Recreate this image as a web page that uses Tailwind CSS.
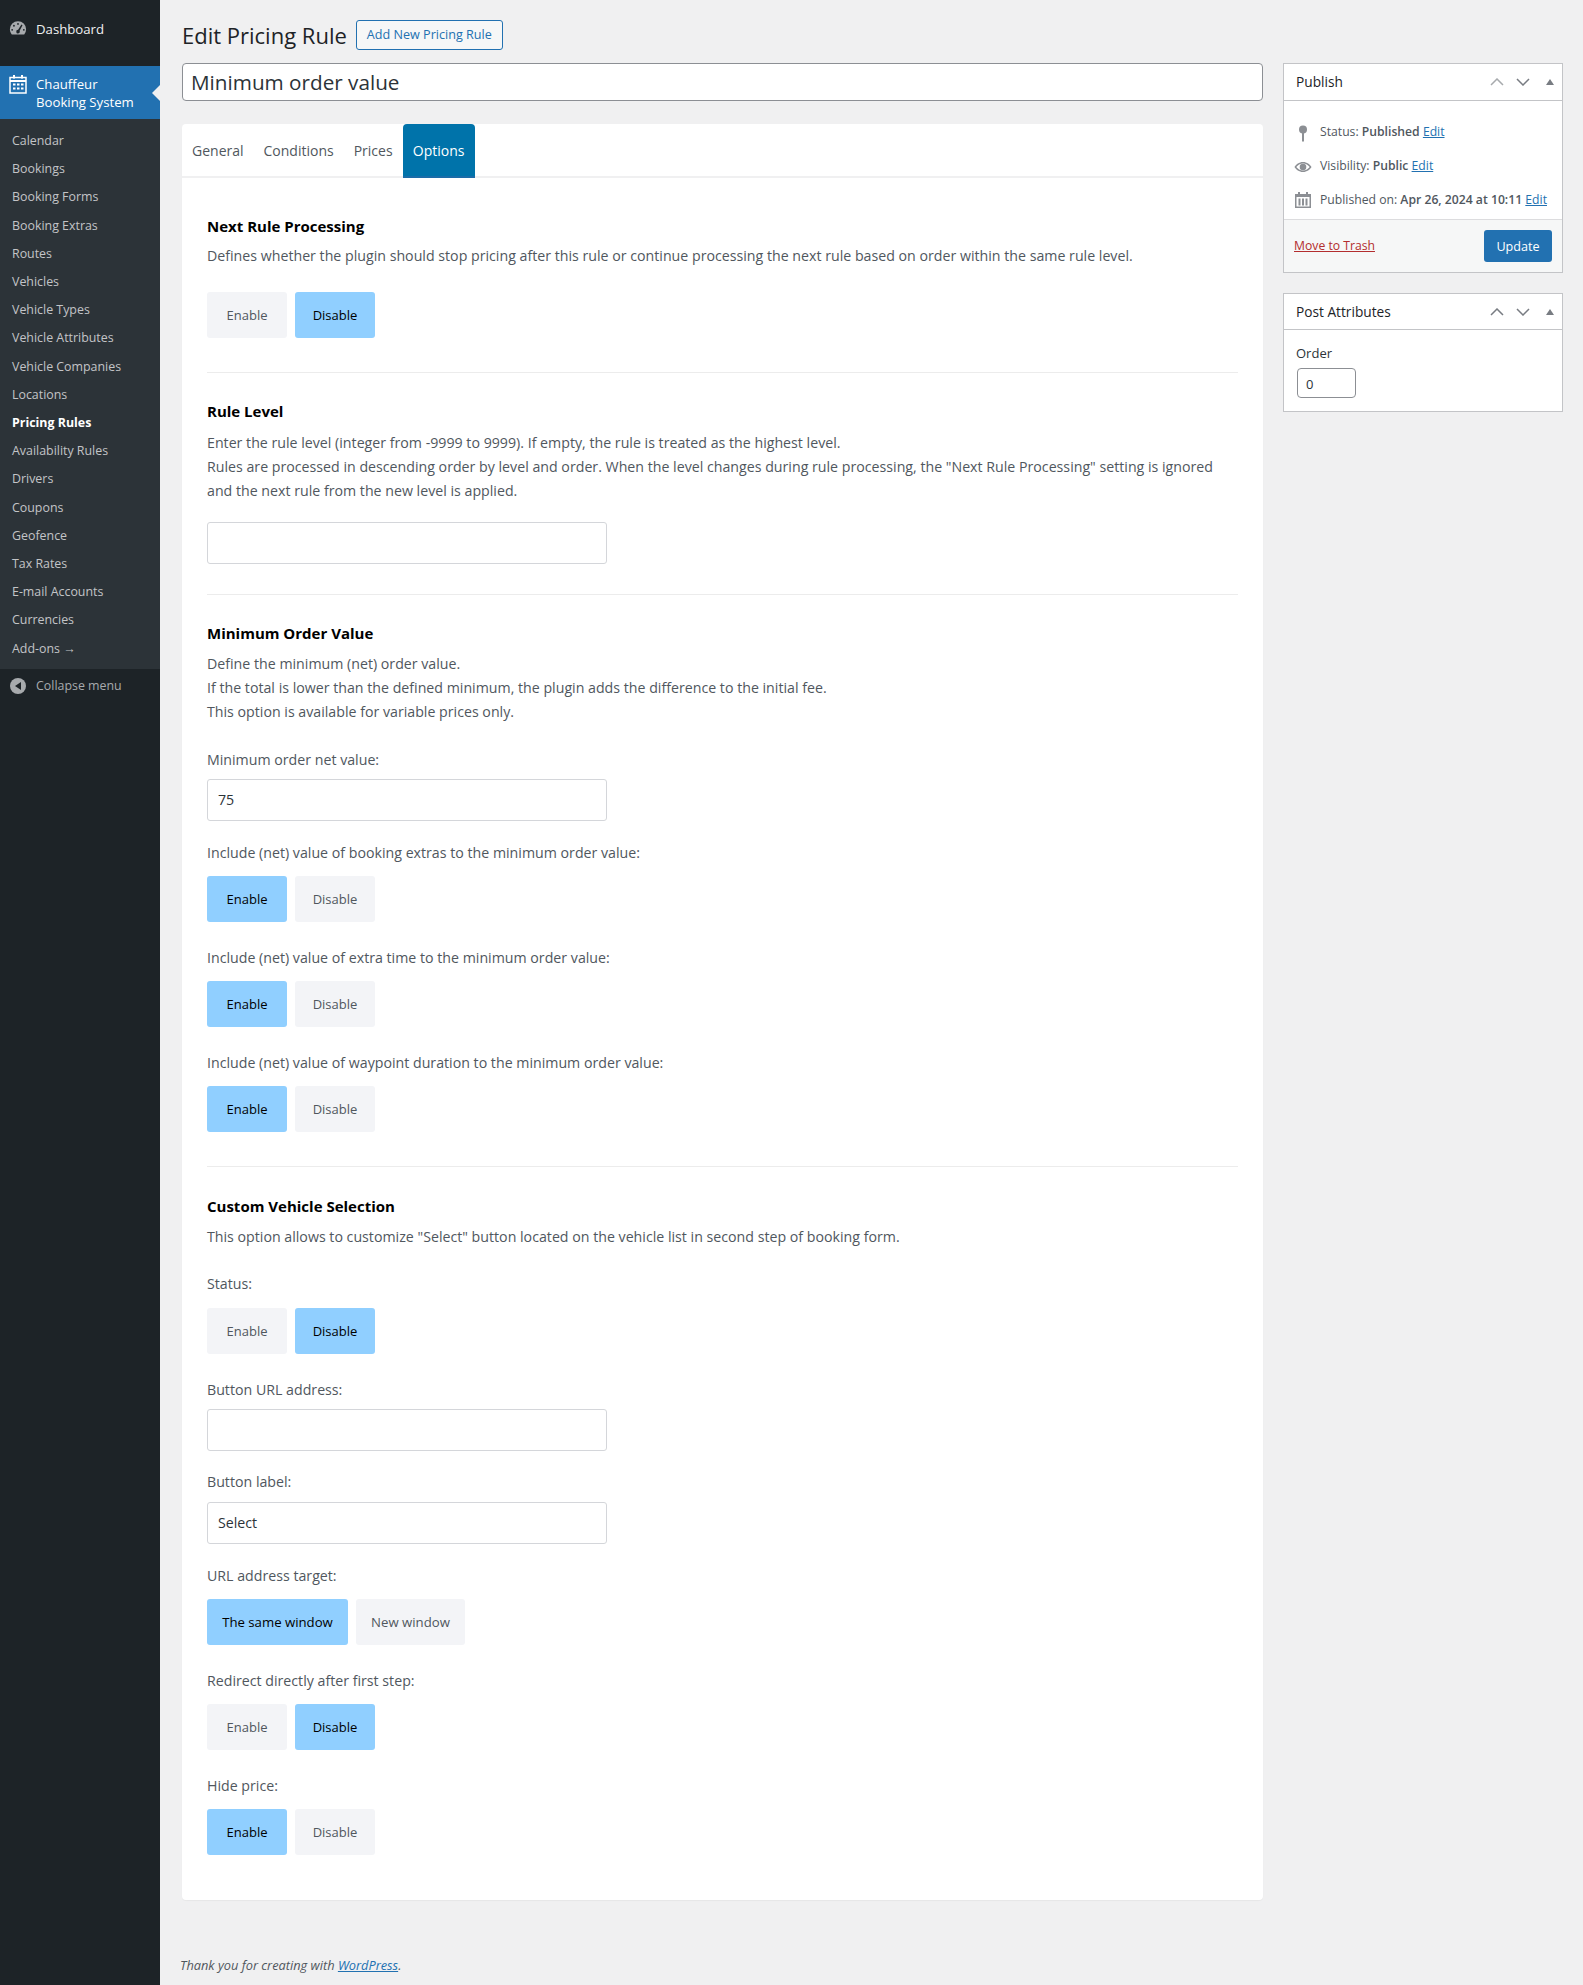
<!DOCTYPE html>
<html lang="en">
<head>
<meta charset="UTF-8">
<title>Edit Pricing Rule</title>
<script src="https://cdn.jsdelivr.net/npm/@tailwindcss/browser@4"></script>
</head>
<body class="bg-[#f0f0f1] font-['Open_Sans',sans-serif] text-[#50575e] antialiased">
<div class="flex min-h-[1985px]">
  <!-- admin menu -->
  <aside class="w-[160px] shrink-0 bg-[#1d2327] text-[12.4px]">
    <div class="h-[66px] pt-[20px] pl-[9px] flex items-start gap-[9px] text-[#f0f0f1] text-[13.2px]">
      <svg class="w-[18px] h-[18px] mt-[-1px] text-[#a7aaad]" viewBox="0 0 20 20" fill="currentColor"><path d="M10 2.500a9 9 0 0 0-9 9c0 2.200.8 4.200 2.100 5.800h13.800A9 9 0 0 0 19 11.500a9 9 0 0 0-9-9zM10 4.500a1 1 0 1 1 0 2 1 1 0 0 1 0-2zM5.500 6.500a1 1 0 1 1 0 2 1 1 0 0 1 0-2zM3.500 11a1 1 0 1 1 0 2 1 1 0 0 1 0-2zM16.500 11a1 1 0 1 1 0 2 1 1 0 0 1 0-2zM13.800 6.200l1.200.8-3.200 6a2 2 0 1 1-1.700-1z"/></svg>
      <span class="leading-[18px]">Dashboard</span>
    </div>
    <div class="relative h-[53px] bg-[#2271b1] text-white pl-[9px] pt-[9px] flex gap-[9px] text-[13.2px] leading-[18px]">
      <svg class="w-[18px] h-[20px] mt-[-1px]" viewBox="0 0 18 20" fill="none" stroke="currentColor" stroke-width="1.500"><rect x="1" y="3.500" width="16" height="15.500"/><path d="M1 7h16" stroke-width="2"/><path d="M5 1v3.500M13 1v3.500" stroke-width="2"/><path d="M4 9.500h2.500v2H4zM8 9.500h2.500v2H8zM12 9.500h2.500v2H12zM4 13.500h2.500v2H4zM8 13.500h2.500v2H8zM12 13.500h2.500v2H12z" fill="currentColor" stroke="none"/></svg>
      <span>Chauffeur<br>Booking System</span>
      <span class="absolute right-0 top-[19px] border-y-[8px] border-r-[8px] border-y-transparent border-r-[#f0f0f1]"></span>
    </div>
    <nav class="bg-[#2c3338] h-[550px] pt-[8px] pl-[12px] text-[#c3c4c7] leading-[28.2px] flex flex-col">
      <a>Calendar</a><a>Bookings</a><a>Booking Forms</a><a>Booking Extras</a><a>Routes</a><a>Vehicles</a><a>Vehicle Types</a><a>Vehicle Attributes</a><a>Vehicle Companies</a><a>Locations</a>
      <a class="font-bold text-white">Pricing Rules</a>
      <a>Availability Rules</a><a>Drivers</a><a>Coupons</a><a>Geofence</a><a>Tax Rates</a><a>E-mail Accounts</a><a>Currencies</a><a>Add-ons →</a>
    </nav>
    <div class="flex items-center gap-[10px] pl-[10px] h-[34px] text-[#a7aaad]">
      <span class="w-[16px] h-[16px] rounded-full bg-[#a7aaad] flex items-center justify-center"><span class="border-y-[4px] border-r-[6px] border-y-transparent border-r-[#1d2327] mr-[1px]"></span></span>
      <span>Collapse menu</span>
    </div>
  </aside>

  <main class="flex-1 pl-[22px] pr-[20px] flex flex-col">
    <div class="flex items-center h-[30px] mt-[20px] gap-[9px]">
      <h1 class="text-[22px] text-[#1d2327] leading-[28px]">Edit Pricing Rule</h1>
      <a class="h-[30px] w-[147px] flex items-center justify-center border border-[#2271b1] rounded-[3px] text-[#2271b1] text-[12.6px] bg-[#f6f7f7]">Add New Pricing Rule</a>
    </div>
    <div class="flex gap-[20px] mt-[13px] items-start">
      <div class="w-[1081px] shrink-0">
        <div class="h-[38px] w-full border border-[#8c8f94] rounded-[4px] bg-white px-[8px] text-[20.7px] leading-[37px] text-[#2c3338]">Minimum order value</div>

        <section class="mt-[23px] h-[1776px] bg-white rounded-[4px] shadow-[0_1px_1px_rgba(0,0,0,0.04)]">
          <div class="flex h-[54px] border-b-2 border-[#f0f0f1] text-[14px] text-[#50575e]">
            <a class="pl-[10px] pr-[10px] leading-[54px]">General</a>
            <a class="px-[10px] leading-[54px]">Conditions</a>
            <a class="px-[10px] leading-[54px]">Prices</a>
            <a class="w-[72px] text-center h-[54px] leading-[54px] bg-[#0073aa] text-white rounded-t-[4px] border-b-2 border-[#1a6ca8]">Options</a>
          </div>

          <div class="px-[25px] pt-[36px] text-[14.2px] leading-[24px]">
            <h2 class="font-bold text-[15px] leading-[24px] text-black">Next Rule Processing</h2>
            <p class="mt-[6px]">Defines whether the plugin should stop pricing after this rule or continue processing the next rule based on order within the same rule level.</p>
            <div class="flex gap-[8px] mt-[24px] text-[13px]">
              <span class="w-[80px] h-[46px] flex items-center justify-center rounded-[3px] bg-[#f3f4f7]">Enable</span>
              <span class="w-[80px] h-[46px] flex items-center justify-center rounded-[3px] bg-[#90cfff] text-black">Disable</span>
            </div>
            <hr class="mt-[34px] border-[#ececec]">

            <h2 class="mt-[26px] font-bold text-[15px] text-black">Rule Level</h2>
            <p class="mt-[8px]">Enter the rule level (integer from -9999 to 9999). If empty, the rule is treated as the highest level.<br>Rules are processed in descending order by level and order. When the level changes during rule processing, the "Next Rule Processing" setting is ignored<br>and the next rule from the new level is applied.</p>
            <div class="mt-[19px] w-[400px] h-[42px] border border-[#d4d6da] rounded-[3px]"></div>
            <hr class="mt-[30px] border-[#ececec]">

            <h2 class="mt-[26px] font-bold text-[15px] text-black">Minimum Order Value</h2>
            <p class="mt-[7px]">Define the minimum (net) order value.<br>If the total is lower than the defined minimum, the plugin adds the difference to the initial fee.<br>This option is available for variable prices only.</p>
            <p class="mt-[24px]">Minimum order net value:</p>
            <div class="mt-[7px] w-[400px] h-[42px] border border-[#d4d6da] rounded-[3px] px-[10px] leading-[40px] text-[#2c3338]">75</div>
            <p class="mt-[20px]">Include (net) value of booking extras to the minimum order value:</p>
            <div class="flex gap-[8px] mt-[11px] text-[13px]">
              <span class="w-[80px] h-[46px] flex items-center justify-center rounded-[3px] bg-[#90cfff] text-black">Enable</span>
              <span class="w-[80px] h-[46px] flex items-center justify-center rounded-[3px] bg-[#f3f4f7]">Disable</span>
            </div>
            <p class="mt-[24px]">Include (net) value of extra time to the minimum order value:</p>
            <div class="flex gap-[8px] mt-[11px] text-[13px]">
              <span class="w-[80px] h-[46px] flex items-center justify-center rounded-[3px] bg-[#90cfff] text-black">Enable</span>
              <span class="w-[80px] h-[46px] flex items-center justify-center rounded-[3px] bg-[#f3f4f7]">Disable</span>
            </div>
            <p class="mt-[24px]">Include (net) value of waypoint duration to the minimum order value:</p>
            <div class="flex gap-[8px] mt-[11px] text-[13px]">
              <span class="w-[80px] h-[46px] flex items-center justify-center rounded-[3px] bg-[#90cfff] text-black">Enable</span>
              <span class="w-[80px] h-[46px] flex items-center justify-center rounded-[3px] bg-[#f3f4f7]">Disable</span>
            </div>
            <hr class="mt-[34px] border-[#ececec]">

            <h2 class="mt-[27px] font-bold text-[15px] text-black">Custom Vehicle Selection</h2>
            <p class="mt-[7px]">This option allows to customize "Select" button located on the vehicle list in second step of booking form.</p>
            <p class="mt-[23px]">Status:</p>
            <div class="flex gap-[8px] mt-[12px] text-[13px]">
              <span class="w-[80px] h-[46px] flex items-center justify-center rounded-[3px] bg-[#f3f4f7]">Enable</span>
              <span class="w-[80px] h-[46px] flex items-center justify-center rounded-[3px] bg-[#90cfff] text-black">Disable</span>
            </div>
            <p class="mt-[24px]">Button URL address:</p>
            <div class="mt-[7px] w-[400px] h-[42px] border border-[#d4d6da] rounded-[3px]"></div>
            <p class="mt-[19px]">Button label:</p>
            <div class="mt-[8px] w-[400px] h-[42px] border border-[#d4d6da] rounded-[3px] px-[10px] leading-[40px] text-[#2c3338]">Select</div>
            <p class="mt-[20px]">URL address target:</p>
            <div class="flex gap-[8px] mt-[11px] text-[13.2px]">
              <span class="w-[141px] h-[46px] flex items-center justify-center rounded-[3px] bg-[#90cfff] text-black">The same window</span>
              <span class="w-[109px] h-[46px] flex items-center justify-center rounded-[3px] bg-[#f3f4f7]">New window</span>
            </div>
            <p class="mt-[24px]">Redirect directly after first step:</p>
            <div class="flex gap-[8px] mt-[11px] text-[13px]">
              <span class="w-[80px] h-[46px] flex items-center justify-center rounded-[3px] bg-[#f3f4f7]">Enable</span>
              <span class="w-[80px] h-[46px] flex items-center justify-center rounded-[3px] bg-[#90cfff] text-black">Disable</span>
            </div>
            <p class="mt-[24px]">Hide price:</p>
            <div class="flex gap-[8px] mt-[11px] text-[13px]">
              <span class="w-[80px] h-[46px] flex items-center justify-center rounded-[3px] bg-[#90cfff] text-black">Enable</span>
              <span class="w-[80px] h-[46px] flex items-center justify-center rounded-[3px] bg-[#f3f4f7]">Disable</span>
            </div>
          </div>
        </section>

        <p class="mt-[55px] ml-[-2px] italic text-[12.8px] leading-[20px]">Thank you for creating with <a class="underline text-[#2271b1]">WordPress</a>.</p>
      </div>

      <!-- side boxes -->
      <div class="w-[280px] shrink-0 text-[13.7px]">
        <div class="border border-[#c3c4c7] bg-white">
          <div class="h-[37px] flex items-center justify-between pl-[12px] pr-[8px] border-b border-[#c3c4c7] text-[#1d2327]">
            <span>Publish</span>
            <div class="flex items-center gap-[12px]">
              <svg class="w-[14px] h-[8px] text-[#a7aaad]" viewBox="0 0 14 8" fill="none" stroke="currentColor" stroke-width="1.500"><path d="M1 7l6-6 6 6"/></svg>
              <svg class="w-[14px] h-[8px] text-[#787c82]" viewBox="0 0 14 8" fill="none" stroke="currentColor" stroke-width="1.500"><path d="M1 1l6 6 6-6"/></svg>
              <span class="ml-[4px] border-x-[4px] border-b-[6px] border-x-transparent border-b-[#787c82]"></span>
            </div>
          </div>
          <div class="h-[118px] relative pt-[19px] pl-[36px] flex flex-col gap-[10px] leading-[24px] text-[12.2px] text-[#50575e]">
            <div><svg class="absolute left-[14px] top-[24px] w-[10px] h-[17px] text-[#8c8f94]" viewBox="0 0 10 17" fill="currentColor"><circle cx="5" cy="4.500" r="4"/><rect x="4" y="8" width="2" height="8.500"/></svg>Status: <b class="font-semibold">Published</b> <a class="underline text-[#2271b1]">Edit</a></div>
            <div><svg class="absolute left-[10px] top-[60px] w-[18px] h-[12px] text-[#8c8f94]" viewBox="0 0 18 12" fill="currentColor"><path d="M9 1C5 1 2 3.500.500 6 2 8.500 5 11 9 11s7-2.500 8.500-5C16 3.500 13 1 9 1zm0 1.500c2.900 0 5.200 1.600 6.700 3.500-1.500 1.900-3.800 3.500-6.700 3.500S3.800 7.900 2.300 6C3.800 4.100 6.100 2.500 9 2.500z"/><circle cx="9" cy="6" r="3.300"/></svg>Visibility: <b class="font-semibold">Public</b> <a class="underline text-[#2271b1]">Edit</a></div>
            <div><svg class="absolute left-[11px] top-[91px] w-[16px] h-[16px] text-[#8c8f94]" viewBox="0 0 16 16" fill="currentColor"><path d="M3 0h2v2h6V0h2v2h3v14H0V2h3zM1.500 5v9.500h13V5z"/><path d="M3.500 6.500h2v7h-2zM7 6.500h2v7H7zM10.500 6.500h2v7h-2z"/></svg>Published on: <b class="font-semibold">Apr 26, 2024 at 10:11</b> <a class="underline text-[#2271b1]">Edit</a></div>
          </div>
          <div class="h-[53px] bg-[#f6f7f7] border-t border-[#dcdcde] flex items-center justify-between pl-[10px] pr-[10px]">
            <a class="underline text-[#b32d2e] text-[12.2px]">Move to Trash</a>
            <span class="w-[68px] h-[32px] flex items-center justify-center rounded-[3px] bg-[#2271b1] text-white text-[12.6px] pt-[2px]">Update</span>
          </div>
        </div>

        <div class="mt-[20px] border border-[#c3c4c7] bg-white">
          <div class="h-[36px] flex items-center justify-between pl-[12px] pr-[8px] pt-[1px] border-b border-[#c3c4c7] text-[#1d2327]">
            <span>Post Attributes</span>
            <div class="flex items-center gap-[12px]">
              <svg class="w-[14px] h-[8px] text-[#787c82]" viewBox="0 0 14 8" fill="none" stroke="currentColor" stroke-width="1.500"><path d="M1 7l6-6 6 6"/></svg>
              <svg class="w-[14px] h-[8px] text-[#787c82]" viewBox="0 0 14 8" fill="none" stroke="currentColor" stroke-width="1.500"><path d="M1 1l6 6 6-6"/></svg>
              <span class="ml-[4px] border-x-[4px] border-b-[6px] border-x-transparent border-b-[#787c82]"></span>
            </div>
          </div>
          <div class="h-[81px] pl-[13px] pt-[13px] text-[#2c3338] text-[13px]">
            <p class="leading-[20px] ml-[-1px]">Order</p>
            <div class="mt-[5px] w-[59px] h-[30px] border border-[#8c8f94] rounded-[4px] pl-[8px] leading-[30px]">0</div>
          </div>
        </div>
      </div>
    </div>
  </main>
</div>
</body>
</html>
